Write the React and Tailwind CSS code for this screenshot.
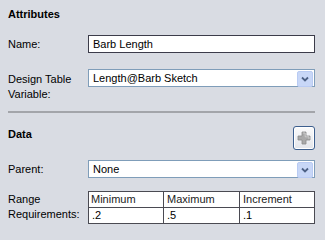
import React from "react";

function DropButton() {
  return (
    <div className="absolute right-[1px] top-[1px] w-[16px] h-[16px] rounded-[2px] border border-[#b9cbf3] bg-[#c8d7f7] flex items-center justify-center">
      <svg width="8" height="6" viewBox="0 0 8 6">
        <path d="M1 1.5 L4 4.5 L7 1.5" fill="none" stroke="#4d6185" strokeWidth="1.8" />
      </svg>
    </div>
  );
}

function Select({ value }) {
  return (
    <div className="relative w-[227px] h-[18px] border border-[#7f9db9] bg-white flex items-center pl-[4px]">
      <span>{value}</span>
      <DropButton />
    </div>
  );
}

function PlusButton() {
  return (
    <div className="w-[22px] h-[24px] rounded-[3px] border border-[#3d5f8e] bg-gradient-to-b from-[#fbfbfb] to-[#e3e5ea] flex items-center justify-center shadow-[inset_0_0_0_1px_#ffffff]">
      <svg width="14" height="14" viewBox="0 0 14 14">
        <path d="M5 1 H9 V5 H13 V9 H9 V13 H5 V9 H1 V5 H5 Z" fill="#a9a9a9" stroke="#8c8c8c" strokeWidth="0.8" />
        <path d="M5.8 2 H8.2 V5.8 H12 V8.2" fill="none" stroke="#d6d6d6" strokeWidth="0.8" />
      </svg>
    </div>
  );
}

export default function App() {
  return (
    <div
      className="w-[325px] h-[240px] bg-[#d9dce3] text-[11px] leading-[13px] text-black pl-[8px] pt-[8px]"
      style={{ fontFamily: '"Liberation Sans", Arial, sans-serif' }}
    >
      <div className="font-bold h-[13px]">Attributes</div>

      <div className="flex mt-[14px]">
        <div className="w-[80px] pt-[3px]">Name:</div>
        <div className="w-[227px] h-[18px] border border-[#3c3c4a] bg-white flex items-center pl-[4px]">
          Barb Length
        </div>
      </div>

      <div className="flex mt-[16px]">
        <div className="w-[80px] pt-[3px] leading-[15px]">
          Design Table
          <br />
          Variable:
        </div>
        <Select value="Length@Barb Sketch" />
      </div>

      <div className="w-[307px] h-[2px] bg-[#a3a5aa] mt-[9px]" />

      <div className="flex items-start justify-between w-[307px] mt-[13px]">
        <div className="font-bold pt-[2px]">Data</div>
        <PlusButton />
      </div>

      <div className="flex mt-[10px]">
        <div className="w-[80px] pt-[3px]">Parent:</div>
        <Select value="None" />
      </div>

      <div className="flex mt-[13px]">
        <div className="w-[80px] leading-[15px] pt-[1px]">
          Range
          <br />
          Requirements:
        </div>
        <table className="w-[227px] border-collapse bg-white table-fixed">
          <tbody>
            <tr className="h-[16px]">
              <td className="border border-[#4a4a52] pl-[2px] w-[75px] text-[#222]">Minimum</td>
              <td className="border border-[#4a4a52] pl-[3px] w-[76px] text-[#222]">Maximum</td>
              <td className="border border-[#4a4a52] pl-[3px] text-[#222]">Increment</td>
            </tr>
            <tr className="h-[16px]">
              <td className="border border-[#4a4a52] pl-[3px]">.2</td>
              <td className="border border-[#4a4a52] pl-[3px]">.5</td>
              <td className="border border-[#4a4a52] pl-[3px]">.1</td>
            </tr>
          </tbody>
        </table>
      </div>
    </div>
  );
}
